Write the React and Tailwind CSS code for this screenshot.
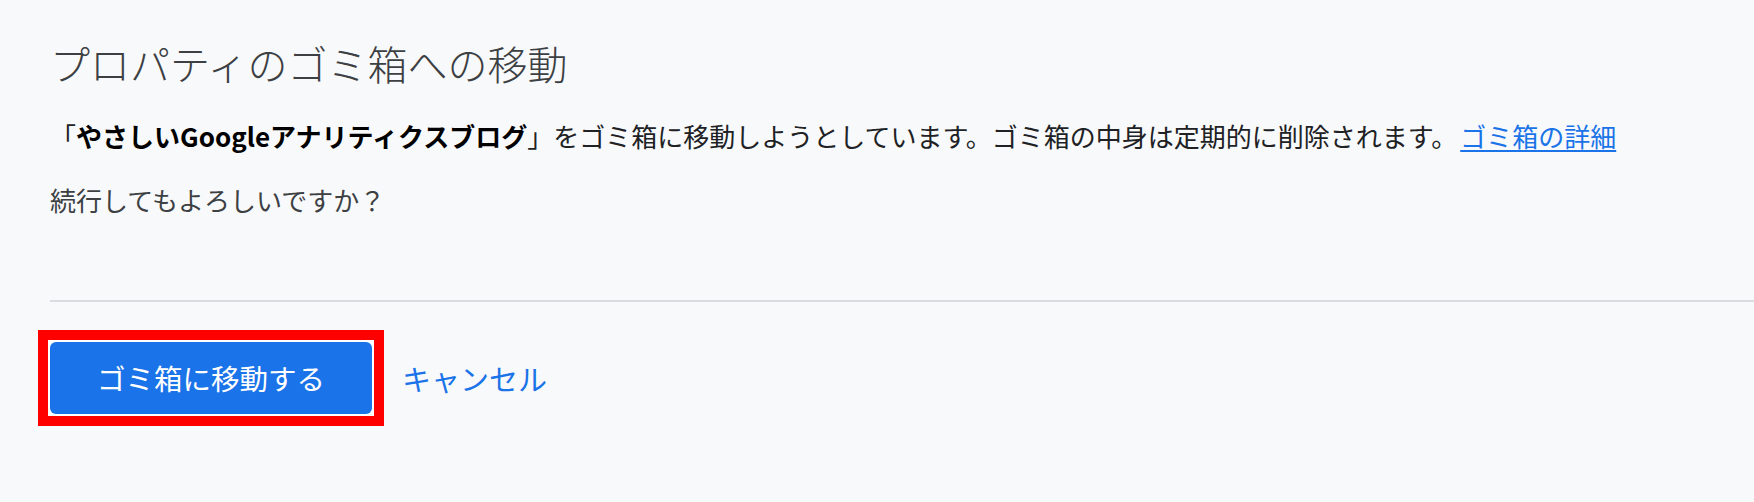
import React from "react";

const font = { fontFamily: '"Noto Sans CJK JP", "Noto Sans", sans-serif' };

export default function App() {
  return (
    <div
      className="min-h-[502px] w-full bg-[#f8f9fa] pl-[50px] pt-[39px]"
      style={font}
    >
      <h1 className="text-[40px] leading-[48px] font-light text-[#3c4043]">
        プロパティのゴミ箱への移動
      </h1>

      <p className="mt-[31px] text-[26px] leading-[36px] text-[#202124] whitespace-nowrap">
        「<span className="font-bold text-black">やさしいGoogleアナリティクスブログ</span>」をゴミ箱に移動しようとしています。ゴミ箱の中身は定期的に削除されます。
        <a href="#" className="ml-[3px] text-[#1a73e8] underline underline-offset-[3px]">
          ゴミ箱の詳細
        </a>
      </p>

      <p className="mt-[28px] text-[26px] leading-[36px] text-[#3c4043]">
        続行してもよろしいですか？
      </p>

      {/* footer actions */}
      <div className="mt-[82px] h-[2px] bg-[#dadce0]" />

      <div className="mt-[28px] -ml-[12px] flex items-center gap-[18px]">
        <div className="border-[10px] border-[#ff0000] bg-white p-[2px]">
          <button className="flex h-[72px] w-[322px] items-center justify-center rounded-[6px] bg-[#1a73e8] text-[28.5px] text-white">
            ゴミ箱に移動する
          </button>
        </div>
        <button className="text-[29px] leading-[36px] text-[#1a73e8]">
          キャンセル
        </button>
      </div>
    </div>
  );
}
